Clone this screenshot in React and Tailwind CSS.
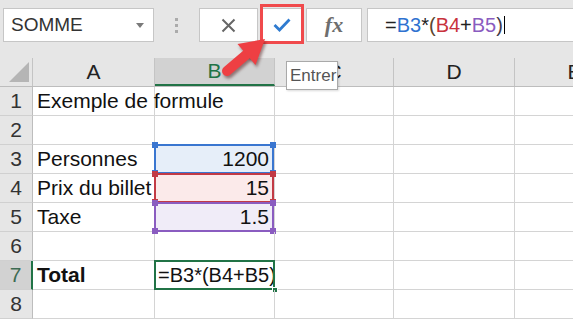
import React from "react";

const cols = [
  { key: "A", w: "w-[122px]" },
  { key: "B", w: "w-[120px]" },
  { key: "C", w: "w-[119px]" },
  { key: "D", w: "w-[121px]" },
  { key: "E", w: "w-[120px]" },
];

const rows = [
  { n: 1, a: "Exemple de formule" },
  { n: 2 },
  { n: 3, a: "Personnes", b: "1200", range: "blue" },
  { n: 4, a: "Prix du billet", b: "15", range: "red" },
  { n: 5, a: "Taxe", b: "1.5", range: "purple" },
  { n: 6 },
  { n: 7, a: "Total", b: "=B3*(B4+B5)", bold: true, active: true },
  { n: 8 },
];

const fills = {
  blue: "bg-[#e6eef9]",
  red: "bg-[#fbeaea]",
  purple: "bg-[#f0ecf8]",
};

const RangeBox = ({ color }) => {
  const border = {
    blue: "border-[#3a76d0]",
    red: "border-[#c23a45]",
    purple: "border-[#8a5cc0]",
  }[color];
  const dot = {
    blue: "bg-[#3a76d0]",
    red: "bg-[#c23a45]",
    purple: "bg-[#8a5cc0]",
  }[color];
  return (
    <>
      <span className={`absolute -top-[1px] -left-[1px] -right-[0px] -bottom-[1px] border-2 ${border} pointer-events-none`} />
      <span className={`absolute -top-[3px] -left-[3px] w-[6px] h-[6px] ${dot}`} />
      <span className={`absolute -top-[3px] -right-[2px] w-[6px] h-[6px] ${dot}`} />
      <span className={`absolute -bottom-[3px] -left-[3px] w-[6px] h-[6px] ${dot}`} />
      <span className={`absolute -bottom-[3px] -right-[2px] w-[6px] h-[6px] ${dot}`} />
    </>
  );
};

const Arrow = () => (
  <svg className="absolute left-[200px] top-[30px]" width="80" height="60" viewBox="0 0 80 60">
    <defs>
      <filter id="sh" x="-30%" y="-30%" width="160%" height="160%">
        <feGaussianBlur stdDeviation="1.6" />
      </filter>
    </defs>
    <g transform="translate(1.5,2.5)" fill="rgba(60,0,0,0.45)" stroke="rgba(60,0,0,0.45)" filter="url(#sh)">
      <line x1="27" y1="41" x2="47" y2="24" strokeWidth="10" strokeLinecap="round" />
      <polygon points="65,9 55.5,35 37.5,14" strokeWidth="0" />
    </g>
    <line x1="27" y1="41" x2="47" y2="24" stroke="#ee3f43" strokeWidth="10" strokeLinecap="round" />
    <polygon points="65,9 55.5,35 37.5,14" fill="#ee3f43" />
  </svg>
);

export default function App() {
  return (
    <div className="relative w-[573px] h-[320px] overflow-hidden bg-white font-['Liberation_Sans',Arial,sans-serif] text-[#111]">
      {/* formula toolbar */}
      <div className="flex items-start h-[58px] bg-[#e6e6e6] pt-[8px] whitespace-nowrap">
        <div className="ml-[3px] w-[151px] h-[34px] shrink-0 bg-white border border-[#c6c6c6] flex items-center justify-between pl-[7px] pr-[9px]">
          <span className="text-[19px] text-[#333]">SOMME</span>
          <span className="w-0 h-0 border-l-[4px] border-r-[4px] border-t-[5px] border-l-transparent border-r-transparent border-t-[#7a7a7a]" />
        </div>
        <div className="w-[45px] h-[34px] shrink-0 flex flex-col items-center justify-center gap-[3px]">
          <span className="w-[3px] h-[3px] bg-[#ababab]" />
          <span className="w-[3px] h-[3px] bg-[#ababab]" />
          <span className="w-[3px] h-[3px] bg-[#ababab]" />
        </div>
        <div className="w-[59px] h-[34px] shrink-0 bg-white border border-[#c6c6c6] flex items-center justify-center">
          <svg width="15" height="15" viewBox="0 0 15 15">
            <path d="M1.5 1.5 L13.5 13.5 M13.5 1.5 L1.5 13.5" stroke="#666" strokeWidth="2" />
          </svg>
        </div>
        <div className="relative ml-[3px] w-[42px] h-[34px] shrink-0 bg-white border border-[#c6c6c6] flex items-center justify-center">
          <svg width="18" height="14" viewBox="0 0 18 14">
            <path d="M1.5 7 L6.5 12 L16.5 1.5" stroke="#2f7bd0" strokeWidth="2.8" fill="none" strokeLinejoin="miter" />
          </svg>
          <span className="absolute -top-[5px] -bottom-[3px] -left-[2px] -right-[2px] border-[3px] border-[#f04a4c]" />
        </div>
        <div className="ml-[3px] w-[56px] h-[34px] shrink-0 bg-white border border-[#c6c6c6] flex items-center justify-center">
          <span className="font-['Liberation_Serif',serif] italic font-bold text-[22px] text-[#6e6e6e] leading-none">fx</span>
        </div>
        <div className="ml-[5px] flex-1 h-[34px] bg-white border border-r-0 border-[#c6c6c6] flex items-center pl-[17px] text-[20px]">
          <span className="text-[#222]">=</span>
          <span className="text-[#2f72d0]">B3</span>
          <span className="text-[#222]">*</span>
          <span className="text-[#5a4630]">(</span>
          <span className="text-[#c8323c]">B4</span>
          <span className="text-[#222]">+</span>
          <span className="text-[#8a5cc0]">B5</span>
          <span className="text-[#3f3a4a]">)</span>
          <span className="ml-[1px] w-[1px] h-[18px] bg-black" />
        </div>
      </div>

      {/* column headers */}
      <div className="flex h-[29px] bg-[#e6e6e6] border-b border-[#bdbdbd]">
        <div className="relative w-[33px] shrink-0 border-r border-[#c4c4c4]">
          <svg className="absolute right-[3px] bottom-[4px]" width="20" height="20" viewBox="0 0 20 20">
            <polygon points="20,0 20,20 0,20" fill="#b5b5b5" />
          </svg>
        </div>
        {cols.map((c) => (
          <div
            key={c.key}
            className={`${c.w} shrink-0 flex items-center justify-center text-[21px] border-r border-[#c4c4c4] ${
              c.key === "B" ? "bg-[#d2d2d2] text-[#217346] border-b-2 border-b-[#217346]" : "text-[#222]"
            }`}
          >
            {c.key}
          </div>
        ))}
      </div>

      {/* grid rows */}
      {rows.map((r) => (
        <div key={r.n} className="flex h-[29px]">
          <div
            className={`w-[33px] shrink-0 flex items-center justify-center text-[21px] border-b border-[#d0d0d0] ${
              r.active
                ? "bg-[#d2d2d2] text-[#3d6b52] border-r-2 border-r-[#217346]"
                : "bg-[#e6e6e6] text-[#333] border-r border-r-[#bdbdbd]"
            }`}
          >
            {r.n}
          </div>
          <div
            className={`w-[122px] shrink-0 flex items-center pl-[4px] text-[21px] border-r border-b border-[#d4d4d4] whitespace-nowrap ${
              r.bold ? "font-bold" : ""
            }`}
          >
            {r.a}
          </div>
          <div
            className={`relative w-[120px] shrink-0 flex items-center text-[21px] border-r border-b border-[#d4d4d4] whitespace-nowrap ${
              r.range ? `${fills[r.range]} justify-end pr-[5px]` : "pl-[3px]"
            }`}
          >
            {r.active ? <span className="text-[20px]">{r.b}</span> : r.b}
            {r.range && <RangeBox color={r.range} />}
            {r.active && (
              <>
                <span className="absolute -top-[1px] -left-[1px] right-[-1px] -bottom-[1px] border-2 border-[#217346]" />
                <span className="absolute -right-[4px] -bottom-[4px] w-[6px] h-[6px] bg-[#217346] border border-white" />
              </>
            )}
          </div>
          <div className="w-[119px] shrink-0 border-r border-b border-[#d4d4d4]" />
          <div className="w-[121px] shrink-0 border-r border-b border-[#d4d4d4]" />
          <div className="w-[120px] shrink-0 border-r border-b border-[#d4d4d4]" />
        </div>
      ))}

      {/* tooltip */}
      <div className="absolute left-[286px] top-[61px] w-[52px] h-[29px] pl-[3px] bg-white border border-[#a9a9a9] shadow-[1px_1px_2px_rgba(0,0,0,0.15)] flex items-center text-[17px] text-[#555] overflow-hidden">
        Entrer
      </div>

      <Arrow />
    </div>
  );
}
